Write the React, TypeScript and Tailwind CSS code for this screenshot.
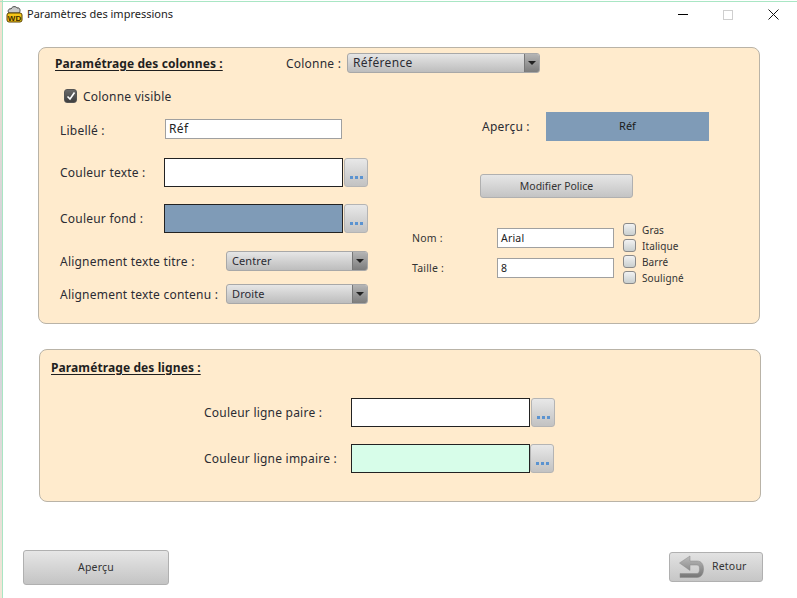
const FONT = "font-['Noto_Sans',sans-serif]";

const Combo = ({ value, className, small = false }: { value: string; className: string; small?: boolean }) => (
  <div className={`flex h-[20px] items-stretch overflow-hidden rounded-[3px] border border-[#a8a8a8] bg-linear-to-b from-[#e6e6e6] to-[#bdbdbd] ${className}`}>
    <span className={`flex-1 pl-[5px] leading-[18px] text-[#2b2b33] ${small ? "text-[11px] tracking-[0.1px]" : "text-[12px] tracking-[0.35px]"}`}>{value}</span>
    <span className="flex w-[15px] items-center justify-center border-l border-[#777] bg-linear-to-b from-[#b5b5b5] to-[#7d7d7d]">
      <span className="h-0 w-0 border-x-[4px] border-t-[4px] border-x-transparent border-t-[#222]" />
    </span>
  </div>
);

const DotsButton = ({ className = "" }: { className?: string }) => (
  <div className={`flex h-[29px] w-[24px] items-end justify-center gap-[2px] rounded-[3px] border border-[#b4b4b4] bg-linear-to-b from-[#e8e8e8] to-[#c2c2c2] pb-[7px] ${className}`}>
    <span className="h-[3px] w-[3px] bg-[#5b93d0]" />
    <span className="h-[3px] w-[3px] bg-[#5b93d0]" />
    <span className="h-[3px] w-[3px] bg-[#5b93d0]" />
  </div>
);

const Swatch = ({ color }: { color: string }) => (
  <div className={`h-[29px] w-[179px] border border-[#222] ${color}`} />
);

const TextBox = ({ value, className }: { value: string; className: string }) => (
  <div className={`h-[20px] border border-[#a0a0a0] bg-white pl-[3px] leading-[18px] text-[#222] ${className}`}>{value}</div>
);

const Check = ({ label }: { label: string }) => (
  <div className="flex h-[16px] items-start">
    <span className="h-[13px] w-[13px] rounded-[3px] border border-[#8a8a8a] bg-linear-to-b from-[#f2f2f2] to-[#c9cfcf]" />
    <span className="ml-[6px] text-[10px] leading-[14px] tracking-[0.1px] text-[#333]">{label}</span>
  </div>
);

const Label = ({ children, className }: { children: string; className: string }) => (
  <span className={`shrink-0 text-[12px] tracking-[0.22px] text-[#2b2b33] ${className}`}>{children}</span>
);

export default function App() {
  return (
    <div className={`relative h-[598px] w-[797px] overflow-hidden bg-white ${FONT}`}>
      {/* what shows of the desktop behind the window */}
      <div className="absolute left-0 top-0 h-full w-[2px] bg-linear-to-b from-[#f7e3cf] via-[#c9cfdc] to-[#f3e6d6]" />
      <div className="absolute left-[2px] top-0 h-full w-px bg-[#a9e6c4]" />
      <div className="absolute left-0 top-px h-px w-full bg-[#a9e6c4]" />

      <div className="flex h-[47px] items-start pl-[6px] pt-[5px]">
        <svg width="17" height="19" viewBox="0 0 17 19" className="shrink-0">
          <path d="M3 8 C1 6 3 3 5 4 C6 1 10 1 11 3 C14 2 15 6 13 8 Z" fill="#c9c9c9" stroke="#444" strokeWidth="1" />
          <rect x="1" y="8" width="15" height="9" rx="2" fill="#f5c518" stroke="#5a4300" strokeWidth="1" />
          <text x="8.5" y="15.5" textAnchor="middle" fontSize="8" fontWeight="700" fill="#3d2c00" fontFamily="Liberation Sans, sans-serif">WD</text>
        </svg>
        <span className="ml-[4px] text-[11px] leading-[18px] text-[#222]">Paramètres des impressions</span>
        <div className="ml-auto flex items-center pt-[4px]">
          <span className="h-px w-[10px] bg-black" />
          <span className="ml-[35px] h-[10px] w-[10px] border border-[#cfcfcf]" />
          <svg width="11" height="11" viewBox="0 0 11 11" className="ml-[35px] mr-[18px]">
            <path d="M0.5 0.5 L10.5 10.5 M10.5 0.5 L0.5 10.5" stroke="#111" strokeWidth="1" />
          </svg>
        </div>
      </div>

      <section className="ml-[38px] h-[277px] w-[722px] rounded-[8px] border border-[#b9b3a7] bg-[#ffebcd] pl-[16px] pt-[5px]">
        <div className="flex h-[20px] items-center">
          <h2 className="w-[231px] shrink-0 pt-[2px] text-[12px] font-bold tracking-[0.1px] text-[#1f1f1f] underline underline-offset-2">Paramétrage des colonnes :</h2>
          <Label className="w-[61px] pt-[2px]">Colonne :</Label>
          <Combo value="Référence" className="w-[193px]" />
        </div>
        <div className="ml-[9px] mt-[16px] flex h-[14px] items-center">
          <span className="flex h-[14px] w-[13px] items-center justify-center rounded-[3px] border border-[#555] bg-linear-to-b from-[#6a6a6a] to-[#3f3f3f]">
            <svg width="10" height="10" viewBox="0 0 10 10">
              <path d="M1.5 5.5 L4 8 L8.5 1.5" fill="none" stroke="#fff" strokeWidth="1.6" />
            </svg>
          </span>
          <Label className="ml-[6px] pt-[2px]">Colonne visible</Label>
        </div>

        <div className="mt-[9px] flex">
          <div className="ml-[5px] w-[308px] shrink-0 pt-[7px]">
            <div className="flex h-[20px] items-center">
              <Label className="w-[105px] pt-[3px]">Libellé :</Label>
              <TextBox value="Réf" className="w-[177px] text-[12px] tracking-[0.35px]" />
            </div>
            <div className="mt-[19px] flex h-[29px] items-center">
              <Label className="w-[104px]">Couleur texte :</Label>
              <Swatch color="bg-white" />
              <DotsButton className="ml-px" />
            </div>
            <div className="mt-[17px] flex h-[29px] items-center">
              <Label className="w-[104px]">Couleur fond :</Label>
              <Swatch color="bg-[#7f9bb7]" />
              <DotsButton className="ml-px" />
            </div>
            <div className="mt-[18px] flex h-[20px] items-center">
              <Label className="w-[166px] pt-[2px]">Alignement texte titre :</Label>
              <Combo value="Centrer" small className="w-[142px]" />
            </div>
            <div className="mt-[13px] flex h-[20px] items-center">
              <Label className="w-[166px] pt-[2px]">Alignement texte contenu :</Label>
              <Combo value="Droite" small className="w-[142px]" />
            </div>
          </div>

          <div className="ml-[44px] flex-1">
            <div className="ml-[70px] flex h-[29px] items-center">
              <Label className="w-[64px]">Aperçu :</Label>
              <div className="flex h-[29px] w-[163px] items-center justify-center bg-[#7f9bb7] text-[11px] text-[#1c1c1c]">Réf</div>
            </div>
            <div className="ml-[68px] mt-[33px] flex h-[24px] w-[153px] items-center justify-center rounded-[3px] border border-[#b0b0b0] bg-linear-to-b from-[#e6e6e6] to-[#c4c4c4] pt-[1px] text-[10.5px] text-[#333]">
              Modifier Police
            </div>
            <div className="mt-[25px] flex">
              <div className="w-[211px] shrink-0 pt-[5px] text-[10.5px] tracking-[0.2px]">
                <div className="flex h-[20px] items-center">
                  <span className="w-[85px] shrink-0 pt-[2px] text-[#333]">Nom :</span>
                  <TextBox value="Arial" className="w-[117px]" />
                </div>
                <div className="mt-[10px] flex h-[20px] items-center">
                  <span className="w-[85px] shrink-0 pt-[2px] text-[#333]">Taille :</span>
                  <TextBox value="8" className="w-[117px]" />
                </div>
              </div>
              <div>
                <Check label="Gras" />
                <Check label="Italique" />
                <Check label="Barré" />
                <Check label="Souligné" />
              </div>
            </div>
          </div>
        </div>
      </section>

      <section className="ml-[39px] mt-[25px] h-[153px] w-[722px] rounded-[8px] border border-[#b9b3a7] bg-[#ffebcd] pl-[11px] pt-[9px]">
        <h2 className="h-[18px] text-[12px] font-bold leading-[18px] tracking-[0.1px] text-[#1f1f1f] underline underline-offset-2">Paramétrage des lignes :</h2>
        <div className="ml-[153px] mt-[21px] flex h-[29px] items-center">
          <Label className="w-[147px]">Couleur ligne paire :</Label>
          <Swatch color="bg-white" />
          <DotsButton className="ml-px" />
        </div>
        <div className="ml-[153px] mt-[17px] flex h-[29px] items-center">
          <Label className="w-[147px]">Couleur ligne impaire :</Label>
          <Swatch color="bg-[#d7fde9]" />
          <DotsButton />
        </div>
      </section>

      <div className="ml-[23px] mt-[48px] flex w-[740px] items-start justify-between">
        <div className="flex h-[35px] w-[146px] items-center justify-center rounded-[3px] border border-[#b0b0b0] bg-linear-to-b from-[#e6e6e6] to-[#c4c4c4] text-[10.5px] tracking-[0.2px] text-[#333]">
          Aperçu
        </div>
        <div className="mt-[2px] flex h-[30px] w-[94px] items-center rounded-[3px] border border-[#b0b0b0] bg-linear-to-b from-[#e2e2e2] to-[#c6c6c6] pl-[9px] text-[10.5px] tracking-[0.2px] text-[#333]">
          <svg width="25" height="24" viewBox="0 0 25 24" className="shrink-0">
            <defs>
              <linearGradient id="retour" x1="0" y1="0" x2="0" y2="1">
                <stop offset="0" stopColor="#bcbcbc" />
                <stop offset="1" stopColor="#767676" />
              </linearGradient>
            </defs>
            <path d="M0.5 8 L11 1 L11 6 L18 6 C22.5 6 24.5 9.5 24.5 14 C24.5 18.5 22.5 22.5 18 22.5 L1 22.5 L1 18.5 L18 18.5 C19.8 18.5 20.5 16.5 20.5 14 C20.5 11.5 19.8 10 18 10 L11 10 L11 15.5 Z" fill="url(#retour)" stroke="#8a8a8a" strokeWidth="0.5" />
          </svg>
          <span className="ml-[8px]">Retour</span>
        </div>
      </div>
    </div>
  );
}
